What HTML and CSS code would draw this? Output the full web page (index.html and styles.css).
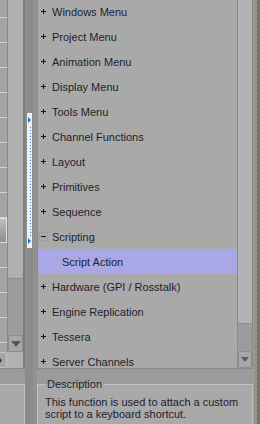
FILE: index.html
```html
<!DOCTYPE html>
<html lang="en">
<head>
<meta charset="UTF-8">
<title>Keyboard Shortcuts</title>
<link rel="stylesheet" href="styles.css">
</head>
<body>
<div class="app">

  <!-- left list, mostly scrolled off -->
  <div class="col-left">
    <div class="left-top">
      <div class="grid">
        <div class="cell-btn"></div>
      </div>
      <div class="vscroll vscroll-left">
        <div class="thumb thumb-left"></div>
        <div class="track"></div>
        <div class="arrow">
          <svg width="10" height="6" viewBox="0 0 10 6"><polygon points="0,0 10,0 5,6" fill="#585858"/></svg>
        </div>
      </div>
    </div>
    <div class="left-hbar">
      <div class="hbtn">
        <svg width="3" height="7" viewBox="0 0 3 7"><polygon points="0,1 2,3.5 0,6" fill="#3c3c3c"/></svg>
      </div>
      <div class="corner"></div>
    </div>
    <div class="left-desc"></div>
  </div>

  <div class="splitter">
    <svg class="grip" width="5" height="135" viewBox="0 0 5 135">
      <rect width="5" height="135" fill="#f1f1f1"/>
      <polygon points="1,4 4,7 1,10" fill="#1d6fe6"/>
      <line x1="3.5" y1="14" x2="3.5" y2="123" stroke="#2a7df2" stroke-width="1" stroke-dasharray="1 2"/>
      <polygon points="1,125 4,128 1,131" fill="#1d6fe6"/>
    </svg>
  </div>

  <div class="col-right">
    <div class="tree-panel">
      <ul class="tree">
        <li class="row"><span class="twist plus"></span>Windows Menu</li>
        <li class="row"><span class="twist plus"></span>Project Menu</li>
        <li class="row"><span class="twist plus"></span>Animation Menu</li>
        <li class="row"><span class="twist plus"></span>Display Menu</li>
        <li class="row"><span class="twist plus"></span>Tools Menu</li>
        <li class="row"><span class="twist plus"></span>Channel Functions</li>
        <li class="row"><span class="twist plus"></span>Layout</li>
        <li class="row"><span class="twist plus"></span>Primitives</li>
        <li class="row"><span class="twist plus"></span>Sequence</li>
        <li class="row"><span class="twist minus"></span>Scripting</li>
        <li class="row child selected">Script Action</li>
        <li class="row"><span class="twist plus"></span>Hardware (GPI / Rosstalk)</li>
        <li class="row"><span class="twist plus"></span>Engine Replication</li>
        <li class="row"><span class="twist plus"></span>Tessera</li>
        <li class="row"><span class="twist plus"></span>Server Channels</li>
      </ul>
      <div class="vscroll vscroll-right">
        <div class="thumb thumb-right"></div>
        <div class="track"></div>
        <div class="arrow">
          <svg width="8" height="5" viewBox="0 0 8 5"><polygon points="0,0 8,0 4,5" fill="#5e5e5e"/></svg>
        </div>
      </div>
    </div>
    <fieldset class="desc">
      <legend>Description</legend>
      <p>This function is used to attach a custom script to a keyboard shortcut.</p>
    </fieldset>
  </div>

  <div class="edge"></div>
</div>
</body>
</html>
```

FILE: styles.css
```css
body {
  margin: 0;
  background: #9b9b9b;
  font-family: "Liberation Sans", Arial, sans-serif;
  font-size: 11px;
  color: #1e1e2e;
  overflow: hidden;
}

.app {
  display: flex;
  width: 260px;
  height: 424px;
  overflow: hidden;
}

/* ---- left column ---- */
.col-left {
  width: 25px;
  display: flex;
  flex-direction: column;
}

.left-top {
  height: 352px;
  display: flex;
  border-right: 2px solid #7c7c7c;
}

.grid {
  width: 7px;
  background-color: #a4a4a4;
  background-image: linear-gradient(to bottom, transparent 17px, #d2d2d2 17px, #d2d2d2 18px, transparent 18px);
  background-size: 100% 25px;
}

.cell-btn {
  box-sizing: border-box;
  margin-top: 218px;
  height: 25px;
  border: 1px solid #e2e2e2;
  border-left: none;
  background: linear-gradient(to bottom, #bebebe, #8e8e8e);
}

.vscroll {
  display: flex;
  flex-direction: column;
  border-left: 1px solid #8a8a8a;
}

.vscroll-left {
  width: 15px;
}

.thumb {
  background: #b0b0b0;
  border-bottom: 1px solid #8e8e8e;
  border-radius: 0 0 2px 2px;
}

.thumb-left {
  height: 278px;
}

.track {
  flex: 1;
  background: #9c9c9c;
}

.arrow {
  box-sizing: border-box;
  height: 17px;
  display: flex;
  align-items: center;
  justify-content: center;
  background: #a7a7a7;
  border: 1px solid #8c8c8c;
  border-radius: 2px;
}

.left-hbar {
  height: 16px;
  display: flex;
  border-right: 2px solid #7c7c7c;
  border-bottom: 1px solid #888;
}

.hbtn {
  box-sizing: border-box;
  width: 7px;
  display: flex;
  align-items: center;
  background: #a6a6a6;
  border: 1px solid #c4c4c4;
  border-left: none;
  border-radius: 0 2px 2px 0;
}

.corner {
  flex: 1;
  background: #b1b1b1;
}

.left-desc {
  flex: 1;
  margin-top: 15px;
  background: #a9a9a9;
  border-top: 1px solid #c2c2c2;
  border-right: 1px solid #c2c2c2;
}

/* ---- splitter with grip ---- */
.splitter {
  width: 12px;
  background: linear-gradient(to right, #8b8b8b 0 8px, #9a9080 8px 9px, #929292 9px);
}

.grip {
  display: block;
  margin: 113px 0 0 2px;
}

/* ---- right column ---- */
.col-right {
  width: 216px;
  display: flex;
  flex-direction: column;
}

.tree-panel {
  height: 368px;
  display: flex;
  background: #a9a9a9;
  border-left: 1px solid #8a8a8a;
  border-right: 1px solid #888;
  border-bottom: 1px solid #888;
}

.tree {
  width: 199px;
  margin: -1px 0 0 0;
  padding: 0;
  list-style: none;
  overflow: hidden;
}

.row {
  height: 25px;
  display: flex;
  align-items: center;
  padding-left: 1px;
  white-space: nowrap;
}

.row.child {
  padding-left: 24px;
}

.row.selected {
  background: #a9a7e6;
}

.twist {
  position: relative;
  width: 9px;
  height: 9px;
  margin-right: 4px;
  margin-top: -1px;
}

.twist::before,
.twist::after {
  content: "";
  position: absolute;
  background: #151515;
}

.twist::before {
  left: 2px;
  top: 4px;
  width: 5px;
  height: 1px;
}

.plus::after {
  left: 4px;
  top: 2px;
  width: 1px;
  height: 5px;
}

.minus {
  box-sizing: border-box;
  border: 1px solid #9e9e9e;
}

.minus::before {
  left: 1px;
  top: 3px;
}

.minus::after {
  display: none;
}

.vscroll-right {
  width: 14px;
}

.thumb-right {
  height: 323px;
  background: #b3b3b3;
}

/* ---- description box ---- */
.desc {
  flex: 1;
  margin: 9px 0 0 0;
  padding: 0 6px 0 7px;
  background: #a9a9a9;
  border: 1px solid #c0c0c0;
  border-bottom: none;
}

.desc legend {
  padding: 0 2px;
  line-height: 13px;
}

.desc p {
  margin: 5px 0 0;
  line-height: 12px;
}

/* ---- window edge ---- */
.edge {
  width: 7px;
  background:
    linear-gradient(to right, #9d9d9d 0 1px, #9a9282 1px 4px, transparent 4px),
    repeating-conic-gradient(#6c6c6c 0 25%, #7f7f7f 0 50%) 0 0 / 4px 4px;
}
```
